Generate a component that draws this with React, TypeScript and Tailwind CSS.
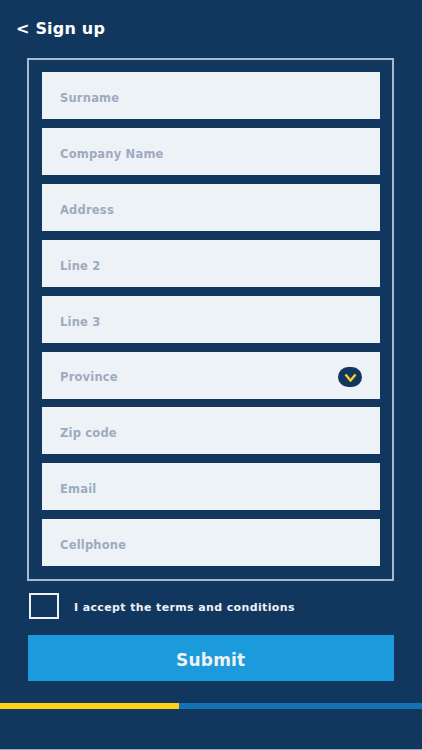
const fields = [
  "Surname",
  "Company Name",
  "Address",
  "Line 2",
  "Line 3",
  "Province",
  "Zip code",
  "Email",
  "Cellphone",
];

export default function App() {
  return (
    <div className="flex h-[750px] w-[422px] flex-col overflow-hidden bg-[#12375f] font-['DejaVu_Sans',sans-serif]">
      {/* Header */}
      <div className="flex h-[58px] items-start pl-4 pt-[18px]">
        <h1 className="text-[16px] leading-[22px] font-bold tracking-[0.2px] text-white">
          &lt; Sign up
        </h1>
      </div>

      {/* Form */}
      <div className="ml-[27px] mr-[28px] flex h-[523px] flex-col gap-[8.92px] border-2 border-[#a9bad0] pl-[13px] pr-[12px] pt-[12px]">
        {fields.map((field) => (
          <div
            key={field}
            className="flex h-[47px] shrink-0 items-center justify-between bg-[#edf2f7] pl-[18px] pr-[18px]"
          >
            <span className="pt-[6px] text-[11.5px] font-bold tracking-[0.2px] text-[#9dabc0]">
              {field}
            </span>
            {field === "Province" && (
              <span className="mt-1 flex h-[20px] w-[24px] items-center justify-center rounded-full bg-[#12375f]">
                <svg width="13" height="9" viewBox="0 0 13 9" fill="none">
                  <path d="M1.5 1.5 6.5 7.5l5-6" stroke="#f5d327" strokeWidth="2.4" />
                </svg>
              </span>
            )}
          </div>
        ))}
      </div>

      {/* Terms */}
      <div className="mt-[12px] ml-[29px] flex items-center gap-[15px]">
        <div className="h-[26px] w-[30px] border-2 border-[#edf2f7]" />
        <span className="pt-[4px] text-[11px] font-bold tracking-[0.37px] text-[#edf2f7]">
          I accept the terms and conditions
        </span>
      </div>

      <button className="ml-[28px] mr-[28.5px] mt-[16px] h-[46px] bg-[#1b9bdb] pt-[5px] text-[17px] font-bold tracking-[0.2px] text-[#edf2f7]">
        Submit
      </button>

      {/* Progress */}
      <div className="mt-[22px] flex h-[6px] bg-[#1473b3]">
        <div className="h-full w-[179px] bg-[#fdd116]" />
      </div>

      <div className="mt-auto h-px bg-[#8fa9c6]" />
    </div>
  );
}
